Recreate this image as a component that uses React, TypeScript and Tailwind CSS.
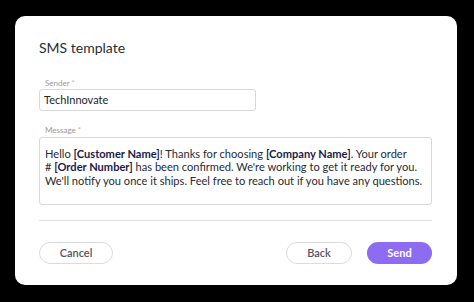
import React from "react";

export default function App() {
  return (
    <div className="w-[474px] h-[302px] bg-black pt-[16px] pl-[15px]" style={{ fontFamily: "Lato, 'Noto Sans', sans-serif" }}>
      <div className="w-[442px] h-[269px] bg-white rounded-[10px] pt-[22px] pl-[24px] pr-[25px] flex flex-col">
        <div className="text-[14px] leading-[20px] text-[#2b2b33]">SMS template</div>
        <div className="mt-[19px] pl-[6px] text-[8px] leading-[12px] text-[#9a9a9a]">
          Sender <span className="text-[#f2a86b]">*</span>
        </div>
        <div className="w-[217px] h-[22px] border border-[#d9d9dd] rounded-[3px] flex items-center px-[4px] text-[11px] text-[#23232b]">
          TechInnovate
        </div>
        <div className="mt-[13px] pl-[6px] text-[8px] leading-[12px] text-[#9a9a9a]">
          Message <span className="text-[#f2a86b]">*</span>
        </div>
        <div className="mt-[1px] h-[68px] border border-[#d9d9dd] rounded-[3px] pt-[9px] px-[5px] text-[11.1px] leading-[13.4px] text-[#2a2a35] whitespace-nowrap">
          <div>
            Hello <b className="text-[#1b1b4b]">[Customer Name]</b>! Thanks for choosing <b className="text-[#1b1b4b]">[Company Name]</b>. Your order
          </div>
          <div>
            # <b className="text-[#1b1b4b]">[Order Number]</b> has been confirmed. We're working to get it ready for you.
          </div>
          <div>We'll notify you once it ships. Feel free to reach out if you have any questions.</div>
        </div>
        <div className="mt-[15px] h-px bg-[#e3e3e6]" />
        <div className="mt-[21px] flex items-center">
          <button className="w-[74px] h-[22px] rounded-full border border-[#dcdce0] text-[11px] font-semibold text-[#55555c]">Cancel</button>
          <div className="flex-1" />
          <button className="w-[66px] h-[22px] rounded-full border border-[#dcdce0] text-[11px] font-semibold text-[#55555c]">Back</button>
          <button className="ml-[15px] w-[65px] h-[22px] rounded-full bg-[#8d6cf2] text-[11px] font-bold text-white">Send</button>
        </div>
      </div>
    </div>
  );
}
